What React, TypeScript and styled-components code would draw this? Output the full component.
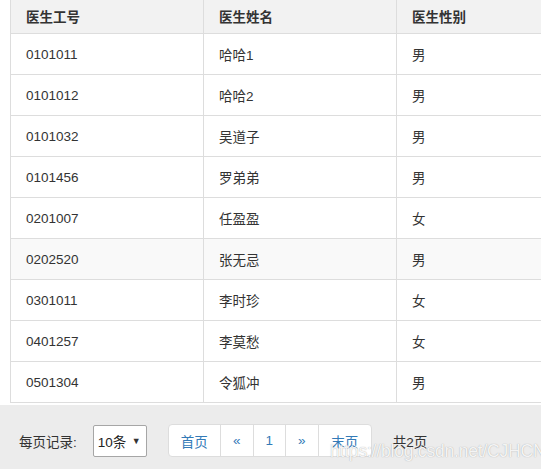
import React from "react";
import styled, { createGlobalStyle } from "styled-components";

const Global = createGlobalStyle`
  html, body { margin: 0; padding: 0; background: #fff; overflow: hidden; }
  body { font-family: "Liberation Sans", "Noto Sans CJK SC", sans-serif; color: #333; }
`;

const Page = styled.div`
  width: 541px;
  height: 469px;
  display: flex;
  flex-direction: column;
  overflow: hidden;
`;

const TableWrap = styled.div`
  padding-left: 10px;
  overflow: hidden;
`;

const Table = styled.table`
  width: 580px;
  border-collapse: collapse;
  table-layout: fixed;
  font-size: 13.5px;
`;

const Th = styled.th`
  height: 33px;
  padding: 0 15px;
  box-sizing: border-box;
  text-align: left;
  font-weight: bold;
  background: #f2f2f2;
  border: 1px solid #ddd;
  border-top: none;
  color: #333;
`;

const Tr = styled.tr<{ $hover?: boolean }>`
  background: ${(p) => (p.$hover ? "#f9f9f9" : "#fff")};
`;

const Td = styled.td`
  height: 41px;
  padding: 1px 15px 0;
  box-sizing: border-box;
  border: 1px solid #ddd;
  color: #333;
`;

const Footer = styled.div`
  margin-top: 2px;
  flex: 1;
  background: #ececec;
  display: flex;
  align-items: center;
  padding: 8px 0 0 19px;
  font-size: 13.5px;
  position: relative;
`;

const Label = styled.span`
  color: #333;
  margin-right: 16px;
`;

const Select = styled.div`
  width: 54px;
  height: 32px;
  box-sizing: border-box;
  border: 1px solid #a6a6a6;
  border-radius: 2px;
  background: #fff;
  display: flex;
  align-items: center;
  justify-content: space-between;
  padding: 0 5px 0 4px;
  color: #222;
`;

const Arrow = styled.span`
  font-size: 9px;
  color: #333;
`;

const Pager = styled.ul`
  list-style: none;
  margin: 0 0 0 21px;
  padding: 0;
  display: flex;
  height: 33px;
`;

const PageItem = styled.li<{ $w: number; $first?: boolean; $last?: boolean }>`
  width: ${(p) => p.$w}px;
  box-sizing: border-box;
  border: 1px solid #ddd;
  margin-left: ${(p) => (p.$first ? 0 : -1)}px;
  background: #fff;
  color: #337ab7;
  display: flex;
  align-items: center;
  justify-content: center;
  border-radius: ${(p) => (p.$first ? "4px 0 0 4px" : p.$last ? "0 4px 4px 0" : "0")};
`;

const Total = styled.span`
  margin-left: 21px;
  color: #333;
`;

const Watermark = styled.span`
  position: absolute;
  left: 330px;
  top: 36px;
  font-size: 17.5px;
  font-family: "Liberation Sans", sans-serif;
  color: rgba(255, 255, 255, 0.9);
  text-shadow: 0 0 1px rgba(90, 90, 90, 0.55);
  letter-spacing: -0.2px;
  white-space: nowrap;
`;

const rows: [string, string, string][] = [
  ["0101011", "哈哈1", "男"],
  ["0101012", "哈哈2", "男"],
  ["0101032", "吴道子", "男"],
  ["0101456", "罗弟弟", "男"],
  ["0201007", "任盈盈", "女"],
  ["0202520", "张无忌", "男"],
  ["0301011", "李时珍", "女"],
  ["0401257", "李莫愁", "女"],
  ["0501304", "令狐冲", "男"],
];

export default function App() {
  return (
    <Page>
      <Global />
      <TableWrap>
        <Table>
          <colgroup>
            <col style={{ width: 193 }} />
            <col style={{ width: 193 }} />
            <col style={{ width: 194 }} />
          </colgroup>
          <thead>
            <tr>
              <Th>医生工号</Th>
              <Th>医生姓名</Th>
              <Th>医生性别</Th>
            </tr>
          </thead>
          <tbody>
            {rows.map((r, i) => (
              <Tr key={r[0]} $hover={i === 5}>
                <Td>{r[0]}</Td>
                <Td>{r[1]}</Td>
                <Td>{r[2]}</Td>
              </Tr>
            ))}
          </tbody>
        </Table>
      </TableWrap>
      <Footer>
        <Label>每页记录:</Label>
        <Select>
          <span>10条</span>
          <Arrow>▼</Arrow>
        </Select>
        <Pager>
          <PageItem $w={53} $first>首页</PageItem>
          <PageItem $w={34}>«</PageItem>
          <PageItem $w={33}>1</PageItem>
          <PageItem $w={34}>»</PageItem>
          <PageItem $w={54} $last>末页</PageItem>
        </Pager>
        <Total>共2页</Total>
        <Watermark>https://blog.csdn.net/CJHCN</Watermark>
      </Footer>
    </Page>
  );
}
